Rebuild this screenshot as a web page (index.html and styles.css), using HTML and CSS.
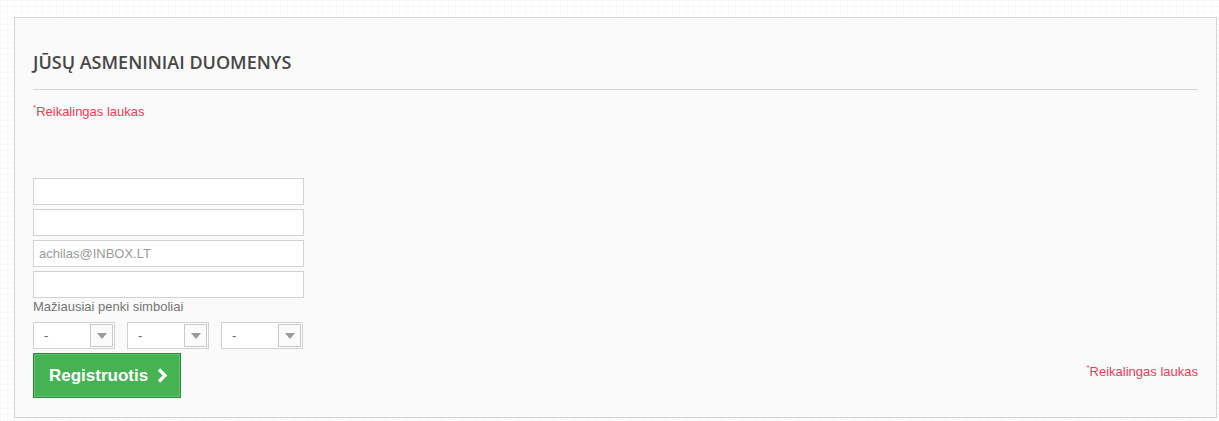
FILE: index.html
```html
<!DOCTYPE html>
<html lang="lt">
<head>
<meta charset="utf-8">
<title>Registracija</title>
<link rel="stylesheet" href="styles.css">
</head>
<body>
<div class="page">
  <section class="panel">
    <h2 class="title">JŪSŲ ASMENINIAI DUOMENYS</h2>
    <p class="required"><sup>*</sup>Reikalingas laukas</p>
    <form class="form">
      <input class="field" type="text">
      <input class="field" type="text">
      <input class="field" type="email" placeholder="achilas@INBOX.LT">
      <input class="field" type="password">
      <div class="hint">Mažiausiai penki simboliai</div>
      <div class="selects">
        <div class="select"><span class="select-val">-</span><span class="select-btn"><span class="tri"></span></span></div>
        <div class="select"><span class="select-val">-</span><span class="select-btn"><span class="tri"></span></span></div>
        <div class="select"><span class="select-val">-</span><span class="select-btn"><span class="tri"></span></span></div>
      </div>
      <div class="actions">
        <button class="btn" type="button">Registruotis
          <svg class="chev" width="11" height="15" viewBox="0 0 11 15"><path d="M2 1.5 L8 7.5 L2 13.5" fill="none" stroke="#fff" stroke-width="3.2" stroke-linecap="butt" stroke-linejoin="miter"/></svg>
        </button>
        <p class="required right"><sup>*</sup>Reikalingas laukas</p>
      </div>
    </form>
  </section>
</div>
</body>
</html>
```

FILE: styles.css
```css
html, body {
  margin: 0;
  padding: 0;
}
body {
  background-color: #ffffff;
  background-image:
    repeating-linear-gradient(90deg, rgba(0,0,0,0.02) 0 1px, transparent 1px 7px),
    repeating-linear-gradient(0deg, rgba(0,0,0,0.018) 0 1px, transparent 1px 6px);
  font-family: "Liberation Sans", Arial, sans-serif;
  font-size: 13px;
}
.page {
  padding: 17px 3px 3px 14px;
}
.panel {
  width: 1203px;
  box-sizing: border-box;
  background: #fafafa;
  border: 1px solid #d4d4d4;
  padding: 32px 18px 19px 18px;
}
.title {
  margin: 0;
  font-family: "Open Sans", sans-serif;
  font-weight: 600;
  font-size: 18px;
  line-height: 24px;
  color: #474747;
  padding-bottom: 15px;
  border-bottom: 1px solid #d6d6d6;
}
.required {
  margin: 13px 0 0;
  color: #f03a55;
  font-size: 13px;
  line-height: 18px;
}
.required sup {
  font-size: 8px;
  vertical-align: top;
  line-height: 8px;
  position: relative;
  top: 1px;
}
.form {
  margin-top: 57px;
  display: flex;
  flex-direction: column;
  align-items: flex-start;
}
.field {
  width: 271px;
  height: 27px;
  box-sizing: border-box;
  border: 1px solid #d2d2d2;
  background: #fff;
  padding: 0 5px;
  margin: 0 0 4px;
  font-family: "Liberation Sans", Arial, sans-serif;
  font-size: 13px;
  color: #555;
  outline: none;
}
.field::placeholder {
  color: #9a9a9a;
}
.field:nth-of-type(4) {
  margin-bottom: 1px;
}
.hint {
  color: #757575;
  font-size: 13px;
  line-height: 16px;
  margin-bottom: 7px;
}
.selects {
  display: flex;
  gap: 12px;
  margin-bottom: 4px;
}
.select {
  width: 82px;
  height: 27px;
  box-sizing: border-box;
  border: 1px solid #d0d0d0;
  background: #fff;
  padding: 1px;
  display: flex;
  align-items: center;
}
.select-val {
  color: #666;
  padding-left: 9px;
  font-size: 13px;
}
.select-btn {
  margin-left: auto;
  width: 23px;
  height: 23px;
  box-sizing: border-box;
  border: 1px solid #c9c9c9;
  background: #fbfbfb;
  display: flex;
  align-items: center;
  justify-content: center;
}
.tri {
  width: 0;
  height: 0;
  border-left: 5px solid transparent;
  border-right: 5px solid transparent;
  border-top: 6px solid #9a9a9a;
}
.actions {
  display: flex;
  align-items: center;
  justify-content: space-between;
  width: 100%;
}
.btn {
  width: 148px;
  height: 45px;
  box-sizing: border-box;
  background: #45b352;
  border: 1px solid #2c8a3a;
  box-shadow: inset 0 0 0 1px #5fc46b;
  color: #fff;
  font-family: "Liberation Sans", Arial, sans-serif;
  font-weight: bold;
  font-size: 17px;
  padding: 0 0 0 15px;
  display: flex;
  align-items: center;
  gap: 9px;
  cursor: pointer;
}
.chev {
  display: block;
}
.required.right {
  margin: 0 0 8px;
}
```
